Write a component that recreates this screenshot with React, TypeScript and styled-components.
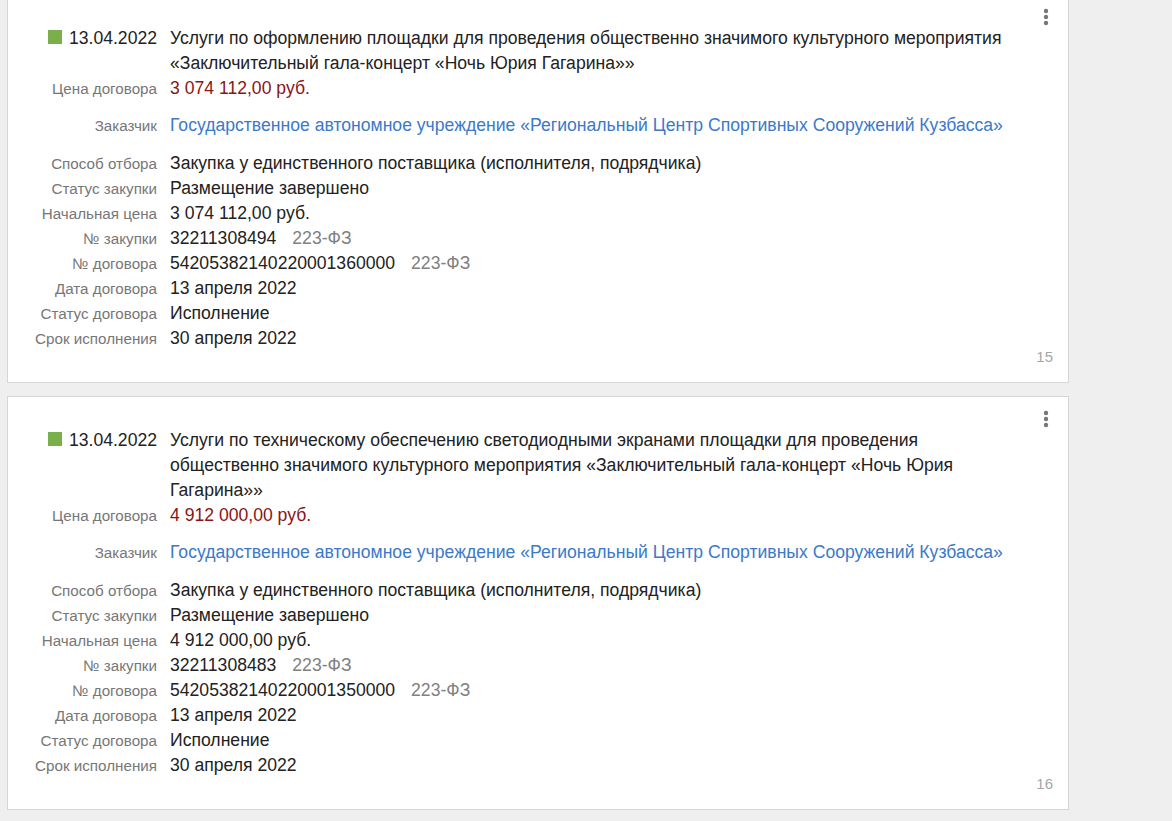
import React from "react";
import styled, { createGlobalStyle } from "styled-components";

const Global = createGlobalStyle`
  html, body { margin: 0; padding: 0; background: #efefef; }
  body { font-family: "Liberation Sans", Arial, sans-serif; color: #222; }
`;

const Page = styled.div`
  display: flex;
  flex-direction: column;
  gap: 13px;
  padding: 0 0 20px 7px;
  margin-top: -6px;
`;

const Card = styled.div`
  position: relative;
  width: 1062px;
  box-sizing: border-box;
  background: #fff;
  border: 1px solid #d6d6d6;
  padding: 30.5px 60px 31.5px 0;
`;

const Grid = styled.div`
  display: grid;
  grid-template-columns: 149px 1fr;
  column-gap: 13px;
  align-items: baseline;
`;

const Label = styled.div<{ $gap?: number }>`
  font-size: 15.2px;
  line-height: 20px;
  color: #777;
  text-align: right;
  white-space: nowrap;
  padding-top: ${(p) => p.$gap ?? 0}px;
`;

const Value = styled.div<{ $gap?: number; $tone?: "price" | "link" }>`
  font-size: 17.6px;
  line-height: 25px;
  color: ${(p) => (p.$tone === "price" ? "#8a1515" : p.$tone === "link" ? "#3b79c9" : "#222")};
  padding-top: ${(p) => p.$gap ?? 0}px;
`;

const DateCell = styled.div`
  display: flex;
  justify-content: flex-end;
  align-items: baseline;
  gap: 7px;
  font-size: 17.6px;
  line-height: 25px;
  color: #222;
`;

const Status = styled.span`
  width: 14px;
  height: 14px;
  background: #79b04b;
  display: inline-block;
`;

const Law = styled.span`
  color: #808080;
  margin-left: 16px;
`;

const Menu = styled.button`
  position: absolute;
  top: 10px;
  right: 16px;
  width: 12px;
  height: 24px;
  padding: 0;
  border: 0;
  background: none;
  display: flex;
  align-items: center;
  justify-content: center;
`;

const Num = styled.div`
  position: absolute;
  right: 15px;
  bottom: 17px;
  font-size: 15px;
  line-height: 16px;
  color: #a6a6a6;
`;

type Item = {
  date: string;
  title: string;
  price: string;
  customer: string;
  purchase: string;
  contract: string;
  idx: number;
};

const items: Item[] = [
  {
    date: "13.04.2022",
    title:
      "Услуги по оформлению площадки для проведения общественно значимого культурного мероприятия «Заключительный гала-концерт «Ночь Юрия Гагарина»»",
    price: "3 074 112,00 руб.",
    customer: "Государственное автономное учреждение «Региональный Центр Спортивных Сооружений Кузбасса»",
    purchase: "32211308494",
    contract: "54205382140220001360000",
    idx: 15,
  },
  {
    date: "13.04.2022",
    title:
      "Услуги по техническому обеспечению светодиодными экранами площадки для проведения общественно значимого культурного мероприятия «Заключительный гала-концерт «Ночь Юрия Гагарина»»",
    price: "4 912 000,00 руб.",
    customer: "Государственное автономное учреждение «Региональный Центр Спортивных Сооружений Кузбасса»",
    purchase: "32211308483",
    contract: "54205382140220001350000",
    idx: 16,
  },
];

const Dots = () => (
  <svg width="6" height="18" viewBox="0 0 6 18">
    <circle cx="3" cy="3" r="2.2" fill="#777" />
    <circle cx="3" cy="9" r="2.2" fill="#777" />
    <circle cx="3" cy="15" r="2.2" fill="#777" />
  </svg>
);

const ContractCard = ({ it }: { it: Item }) => (
  <Card>
    <Menu aria-label="menu">
      <Dots />
    </Menu>
    <Grid>
      <DateCell>
        <Status />
        {it.date}
      </DateCell>
      <Value>{it.title}</Value>

      <Label>Цена договора</Label>
      <Value $tone="price">{it.price}</Value>

      <Label $gap={12.5}>Заказчик</Label>
      <Value $gap={12.5} $tone="link">{it.customer}</Value>

      <Label $gap={12.5}>Способ отбора</Label>
      <Value $gap={12.5}>Закупка у единственного поставщика (исполнителя, подрядчика)</Value>

      <Label>Статус закупки</Label>
      <Value>Размещение завершено</Value>

      <Label>Начальная цена</Label>
      <Value>{it.price}</Value>

      <Label>№ закупки</Label>
      <Value>
        {it.purchase}
        <Law>223-ФЗ</Law>
      </Value>

      <Label>№ договора</Label>
      <Value>
        {it.contract}
        <Law>223-ФЗ</Law>
      </Value>

      <Label>Дата договора</Label>
      <Value>13 апреля 2022</Value>

      <Label>Статус договора</Label>
      <Value>Исполнение</Value>

      <Label>Срок исполнения</Label>
      <Value>30 апреля 2022</Value>
    </Grid>
    <Num>{it.idx}</Num>
  </Card>
);

export default function App() {
  return (
    <>
      <Global />
      <Page>
        {items.map((it) => (
          <ContractCard key={it.idx} it={it} />
        ))}
      </Page>
    </>
  );
}
